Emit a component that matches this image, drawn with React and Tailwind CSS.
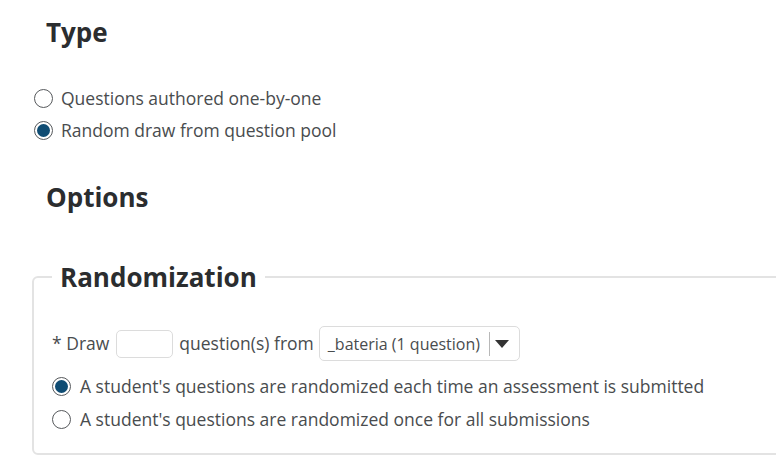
import React from "react";

function Radio({ checked }) {
  return (
    <span className="flex h-[19px] w-[19px] shrink-0 items-center justify-center rounded-full border-[1.5px] border-[#56595c] bg-white">
      {checked && <span className="h-[13px] w-[13px] rounded-full bg-[#0f4c73]" />}
    </span>
  );
}

function RadioRow({ checked, children, gap }) {
  return (
    <div className={gap ? "flex items-center gap-[9px]" : "flex items-center gap-[8px]"}>
      <Radio checked={checked} />
      <span className="whitespace-nowrap">{children}</span>
    </div>
  );
}

export default function App() {
  return (
    <div
      className="relative h-[471px] w-[776px] overflow-hidden bg-white text-[17.5px] text-[#494c4e]"
      style={{ fontFamily: '"Open Sans", "Noto Sans", sans-serif' }}
    >
      <div className="pl-[46px] pt-[14px]">
        <h2 className="text-[26px] font-bold leading-[36px] text-[#2b2d2f]">Type</h2>
      </div>
      <div className="mt-[36px] flex flex-col gap-[8px] pl-[34px] leading-[24px]">
        <RadioRow>Questions authored one-by-one</RadioRow>
        <RadioRow checked>Random draw from question pool</RadioRow>
      </div>
      <div className="mt-[37px] pl-[46px]">
        <h2 className="text-[26px] font-bold leading-[36px] text-[#2b2d2f]">Options</h2>
      </div>
      <fieldset className="ml-[32px] mt-[44px] w-[780px] rounded-[6px] border-2 border-[#e3e3e3] px-[18px] pb-[22px]">
        <legend className="px-[8px] text-[26px] font-bold leading-[36px] text-[#2b2d2f]">Randomization</legend>
        <div className="mt-[31px] flex items-center">
          <span className="whitespace-nowrap">* Draw</span>
          <span className="ml-[7px] h-[28px] w-[57px] rounded-[5px] border border-[#dcdcdc] bg-white" />
          <span className="ml-[6px] whitespace-nowrap">question(s) from</span>
          <span className="ml-[5px] flex h-[35px] w-[201px] items-center rounded-[5px] border border-[#dcdcdc] bg-white pl-[8px] text-[16px]">
            <span className="whitespace-nowrap">_bateria (1 question)</span>
            <span className="ml-[9px] h-[24px] w-px bg-[#b8b8b8]" />
            <svg width="14" height="8" viewBox="0 0 14 8" className="ml-[5px]">
              <path d="M0 0 L14 0 L7 8 Z" fill="#333" />
            </svg>
          </span>
        </div>
        <div className="mt-[13px] flex flex-col gap-[9px] leading-[24px]">
          <RadioRow checked gap>A student's questions are randomized each time an assessment is submitted</RadioRow>
          <RadioRow gap>A student's questions are randomized once for all submissions</RadioRow>
        </div>
      </fieldset>
    </div>
  );
}
